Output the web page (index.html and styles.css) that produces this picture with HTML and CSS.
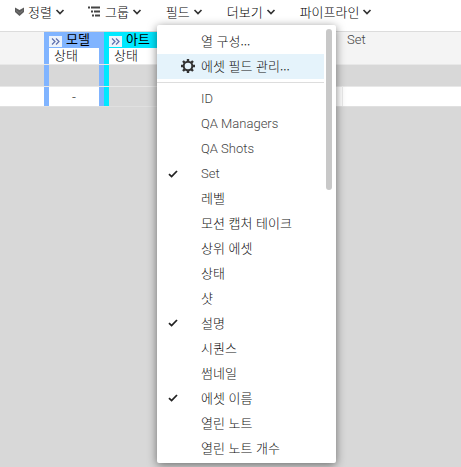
FILE: index.html
```html
<!DOCTYPE html>
<html lang="ko">
<head>
<meta charset="utf-8">
<title>에셋</title>
<link rel="stylesheet" href="styles.css">
</head>
<body>
<svg class="defs" aria-hidden="true">
  <symbol id="chevron" viewBox="0 0 10 8"><path d="M1.500 2 5 5.500 8.500 2" fill="none" stroke="currentColor" stroke-width="1.700"/></symbol>
  <symbol id="check" viewBox="0 0 10 8"><path d="M1 4.200 3.600 6.600 9 1" fill="none" stroke="currentColor" stroke-width="1.800"/></symbol>
  <symbol id="expand" viewBox="0 0 13 11"><path d="M3 2.500 6 5.500 3 8.500M7 2.500 10 5.500 7 8.500" fill="none" stroke="currentColor" stroke-width="1.200"/></symbol>
</svg>
<nav class="toolbar">
  <button class="tool tool-sort" type="button"><svg class="icon-sort" viewBox="0 0 9 9"><path d="M0 0.500 4.500 3 9 0.500V5L4.500 9 0 5Z" fill="#5c5c5c"/><path d="M1 3.500 4.500 6 8 3.500" fill="none" stroke="#888" stroke-width=".6"/></svg>정렬<svg class="chevron"><use href="#chevron"/></svg></button>
  <button class="tool tool-group" type="button"><svg class="icon-group" viewBox="0 0 12 11"><path d="M0 1.500H2M3 1.500H12M3 5.500H5M6 5.500H12M4 9.500H6M7 9.500H12" fill="none" stroke="#444" stroke-width="1.800"/></svg>그룹<svg class="chevron"><use href="#chevron"/></svg></button>
  <button class="tool tool-field" type="button" aria-expanded="true">필드<svg class="chevron"><use href="#chevron"/></svg></button>
  <button class="tool tool-more" type="button">더보기<svg class="chevron"><use href="#chevron"/></svg></button>
  <button class="tool" type="button">파이프라인<svg class="chevron"><use href="#chevron"/></svg></button>
</nav>
<main class="workspace">
  <table class="grid">
    <colgroup><col class="col-start"><col class="col-step"><col class="col-art"><col class="col-gap"><col></colgroup>
    <thead>
      <tr class="head-top">
        <th></th>
        <th class="model step"><span class="step-title"><svg class="expand"><use href="#expand"/></svg>모델</span></th>
        <th class="art step"><span class="step-title"><svg class="expand"><use href="#expand"/></svg>아트</span></th>
        <th></th>
        <th class="field">Set</th>
      </tr>
      <tr class="head-sub">
        <th></th><th class="model sub">상태</th><th class="art sub">상태</th><th></th><th></th>
      </tr>
    </thead>
    <tbody>
      <tr class="group-row"><td></td><td class="model"></td><td class="art"></td><td></td><td></td></tr>
      <tr class="data-row"><td></td><td class="model">-</td><td class="art"></td><td></td><td class="value"></td></tr>
    </tbody>
  </table>
</main>
<div class="menu" role="menu" aria-label="필드">
  <div class="menu-list">
    <button class="item" type="button" role="menuitem">열 구성...</button>
    <button class="item active" type="button" role="menuitem"><svg class="gear" viewBox="0 0 14 14"><circle cx="7" cy="7" r="4.300" fill="none" stroke="currentColor" stroke-width="2"/><path d="M7 0V2.500M7 11.500V14M0 7H2.500M11.500 7H14M2 2 3.800 3.800M10.200 10.200 12 12M12 2 10.200 3.800M3.800 10.200 2 12" stroke="currentColor" stroke-width="2.400"/></svg>에셋 필드 관리...</button>
    <hr>
    <button class="item latin" type="button" role="menuitemcheckbox" aria-checked="false">ID</button>
    <button class="item latin" type="button" role="menuitemcheckbox" aria-checked="false">QA Managers</button>
    <button class="item latin" type="button" role="menuitemcheckbox" aria-checked="false">QA Shots</button>
    <button class="item latin" type="button" role="menuitemcheckbox" aria-checked="true"><svg class="check"><use href="#check"/></svg>Set</button>
    <button class="item" type="button" role="menuitemcheckbox" aria-checked="false">레벨</button>
    <button class="item" type="button" role="menuitemcheckbox" aria-checked="false">모션 캡처 테이크</button>
    <button class="item" type="button" role="menuitemcheckbox" aria-checked="false">상위 에셋</button>
    <button class="item" type="button" role="menuitemcheckbox" aria-checked="false">상태</button>
    <button class="item" type="button" role="menuitemcheckbox" aria-checked="false">샷</button>
    <button class="item" type="button" role="menuitemcheckbox" aria-checked="true"><svg class="check"><use href="#check"/></svg>설명</button>
    <button class="item" type="button" role="menuitemcheckbox" aria-checked="false">시퀀스</button>
    <button class="item" type="button" role="menuitemcheckbox" aria-checked="false">썸네일</button>
    <button class="item" type="button" role="menuitemcheckbox" aria-checked="true"><svg class="check"><use href="#check"/></svg>에셋 이름</button>
    <button class="item" type="button" role="menuitemcheckbox" aria-checked="false">열린 노트</button>
    <button class="item" type="button" role="menuitemcheckbox" aria-checked="false">열린 노트 개수</button>
  </div>
  <div class="scroll-thumb"></div>
</div>
</body>
</html>
```
FILE: styles.css
```css
* { box-sizing: border-box; }
body {
  margin: 0;
  min-height: 100vh;
  background: #d8d8d8;
  color: #222;
  font: 13px/16px "Noto Sans CJK KR", sans-serif;
  overflow: hidden;
}
button { font: inherit; color: inherit; border: 0; padding: 0; background: none; }
svg { display: block; flex: none; }
.defs { position: absolute; width: 0; height: 0; }

.toolbar {
  display: flex;
  height: 32px;
  padding: 0 0 8px 15px;
  background: #fff;
  border-bottom: 1px solid #dcdcdc;
  font-weight: 300;
}
.tool { display: flex; align-items: center; white-space: nowrap; flex: none; color: #000; }
.tool-sort { margin-right: 23px; }
.tool-group, .tool-field, .tool-more { margin-right: 24px; }
.chevron { width: 10px; height: 8px; margin-left: 3px; color: #333; }
.icon-sort { width: 9px; height: 9px; margin-right: 4px; }
.icon-group { width: 12px; height: 11px; margin-right: 5px; }

.grid { width: 100%; border-collapse: collapse; table-layout: fixed; font-weight: 300; }
.col-start { width: 44px; }
.col-step, .col-art { width: 60px; }
.col-gap { width: 178px; }
th, td { padding: 0; font-weight: inherit; text-align: left; vertical-align: top; }
thead th { height: 16px; line-height: 16px; background: #f4f4f4; }
.step-title { display: flex; gap: 4px; height: 16px; line-height: 14px; color: #000; font-weight: 400; }
.expand { width: 13px; height: 11px; margin-top: 4px; background: #edf3fb; color: #5d6fae; }
.step { padding-left: 5px; }
thead .model { background: #80b4ff; }
thead .art { background: #00e8ff; }
thead .field { padding-left: 5px; font-family: Roboto, sans-serif; color: #444; }
thead .sub { padding-left: 10px; line-height: 14px; background: #fff; color: #000; }
.model { box-shadow: inset 5px 0 #80b4ff, inset -5px 0 #80b4ff; }
.art { box-shadow: inset 5px 0 #00e8ff; }
tbody tr { border-top: 1px solid #e8e8e8; }
.group-row td { height: 22px; }
.data-row td { height: 20px; line-height: 18px; background: #fff; border-bottom: 1px solid #e0e0e0; }
.data-row .model { padding-top: 1px; text-align: center; }
.data-row .art { background: #d8d8d8; }
.data-row .value { border-left: 1px solid #ececec; }

.menu {
  position: absolute;
  top: 25px;
  left: 157px;
  display: flex;
  justify-content: space-between;
  padding: 4px 4px 2px 0;
  width: 179px;
  background: #fff;
  border-radius: 2px;
  box-shadow: 0 2px 10px rgba(0, 0, 0, .5);
  font-weight: 300;
}
.menu-list { width: 167px; }
.item {
  display: flex;
  align-items: center;
  width: 100%;
  height: 25px;
  padding: 0 0 2px 44px;
  position: relative;
  color: #111;
  white-space: nowrap;
}
.latin { padding-bottom: 0; font-family: Roboto, sans-serif; color: #444; }
.active { background: #e5f3fb; }
hr { height: 1px; margin: 3px 0; border: 0; background: #ddd; }
.gear { position: absolute; left: 24px; width: 14px; height: 14px; color: #333; }
.check { position: absolute; left: 11px; width: 10px; height: 8px; color: #222; }
.scroll-thumb { width: 6px; height: 161px; border-radius: 3px; background: #c8c8c8; }
```
